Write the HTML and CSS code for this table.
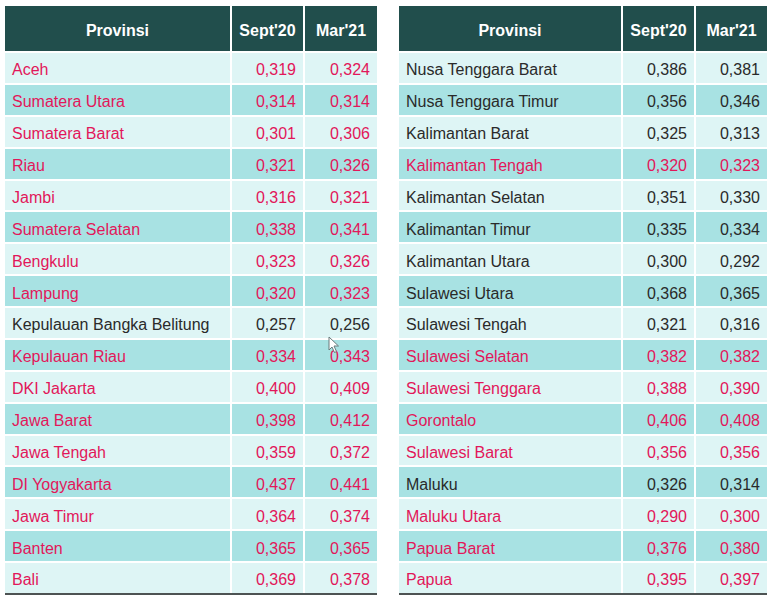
FILE: index.html
```html
<!DOCTYPE html>
<html lang="id">
<head>
<meta charset="utf-8">
<title>Provinsi</title>
<link rel="stylesheet" href="styles.css">
</head>
<body>
<div class="page">
  <div class="tbl tbl-left">
    <div class="row head"><div class="c name">Provinsi</div><div class="c">Sept'20</div><div class="c">Mar'21</div></div>
    <div class="row lt red"><div class="c name">Aceh</div><div class="c num">0,319</div><div class="c num">0,324</div></div>
    <div class="row dk red"><div class="c name">Sumatera Utara</div><div class="c num">0,314</div><div class="c num">0,314</div></div>
    <div class="row lt red"><div class="c name">Sumatera Barat</div><div class="c num">0,301</div><div class="c num">0,306</div></div>
    <div class="row dk red"><div class="c name">Riau</div><div class="c num">0,321</div><div class="c num">0,326</div></div>
    <div class="row lt red"><div class="c name">Jambi</div><div class="c num">0,316</div><div class="c num">0,321</div></div>
    <div class="row dk red"><div class="c name">Sumatera Selatan</div><div class="c num">0,338</div><div class="c num">0,341</div></div>
    <div class="row lt red"><div class="c name">Bengkulu</div><div class="c num">0,323</div><div class="c num">0,326</div></div>
    <div class="row dk red"><div class="c name">Lampung</div><div class="c num">0,320</div><div class="c num">0,323</div></div>
    <div class="row lt"><div class="c name">Kepulauan Bangka Belitung</div><div class="c num">0,257</div><div class="c num">0,256</div></div>
    <div class="row dk red"><div class="c name">Kepulauan Riau</div><div class="c num">0,334</div><div class="c num">0,343</div></div>
    <div class="row lt red"><div class="c name">DKI Jakarta</div><div class="c num">0,400</div><div class="c num">0,409</div></div>
    <div class="row dk red"><div class="c name">Jawa Barat</div><div class="c num">0,398</div><div class="c num">0,412</div></div>
    <div class="row lt red"><div class="c name">Jawa Tengah</div><div class="c num">0,359</div><div class="c num">0,372</div></div>
    <div class="row dk red"><div class="c name">DI Yogyakarta</div><div class="c num">0,437</div><div class="c num">0,441</div></div>
    <div class="row lt red"><div class="c name">Jawa Timur</div><div class="c num">0,364</div><div class="c num">0,374</div></div>
    <div class="row dk red"><div class="c name">Banten</div><div class="c num">0,365</div><div class="c num">0,365</div></div>
    <div class="row lt red"><div class="c name">Bali</div><div class="c num">0,369</div><div class="c num">0,378</div></div>
  </div>
  <div class="tbl tbl-right">
    <div class="row head"><div class="c name">Provinsi</div><div class="c">Sept'20</div><div class="c">Mar'21</div></div>
    <div class="row lt"><div class="c name">Nusa Tenggara Barat</div><div class="c num">0,386</div><div class="c num">0,381</div></div>
    <div class="row dk"><div class="c name">Nusa Tenggara Timur</div><div class="c num">0,356</div><div class="c num">0,346</div></div>
    <div class="row lt"><div class="c name">Kalimantan Barat</div><div class="c num">0,325</div><div class="c num">0,313</div></div>
    <div class="row dk red"><div class="c name">Kalimantan Tengah</div><div class="c num">0,320</div><div class="c num">0,323</div></div>
    <div class="row lt"><div class="c name">Kalimantan Selatan</div><div class="c num">0,351</div><div class="c num">0,330</div></div>
    <div class="row dk"><div class="c name">Kalimantan Timur</div><div class="c num">0,335</div><div class="c num">0,334</div></div>
    <div class="row lt"><div class="c name">Kalimantan Utara</div><div class="c num">0,300</div><div class="c num">0,292</div></div>
    <div class="row dk"><div class="c name">Sulawesi Utara</div><div class="c num">0,368</div><div class="c num">0,365</div></div>
    <div class="row lt"><div class="c name">Sulawesi Tengah</div><div class="c num">0,321</div><div class="c num">0,316</div></div>
    <div class="row dk red"><div class="c name">Sulawesi Selatan</div><div class="c num">0,382</div><div class="c num">0,382</div></div>
    <div class="row lt red"><div class="c name">Sulawesi Tenggara</div><div class="c num">0,388</div><div class="c num">0,390</div></div>
    <div class="row dk red"><div class="c name">Gorontalo</div><div class="c num">0,406</div><div class="c num">0,408</div></div>
    <div class="row lt red"><div class="c name">Sulawesi Barat</div><div class="c num">0,356</div><div class="c num">0,356</div></div>
    <div class="row dk"><div class="c name">Maluku</div><div class="c num">0,326</div><div class="c num">0,314</div></div>
    <div class="row lt red"><div class="c name">Maluku Utara</div><div class="c num">0,290</div><div class="c num">0,300</div></div>
    <div class="row dk red"><div class="c name">Papua Barat</div><div class="c num">0,376</div><div class="c num">0,380</div></div>
    <div class="row lt red"><div class="c name">Papua</div><div class="c num">0,395</div><div class="c num">0,397</div></div>
  </div>
  <svg class="cursor" width="12" height="18" viewBox="0 0 12 18"><path d="M1 1 L1 14 L4 11 L6.5 16.5 L8.5 15.5 L6 10 L10.5 10 Z" fill="#ffffff" stroke="#6a7a7c" stroke-width="1" stroke-linejoin="round"/></svg>
</div>
</body>
</html>
```

FILE: styles.css
```css
html, body {
  margin: 0;
  padding: 0;
  background: #ffffff;
}

.page {
  position: relative;
  display: flex;
  gap: 22px;
  padding: 6px 0 0 5px;
  font-family: "Liberation Sans", Arial, sans-serif;
  font-size: 16px;
  color: #2a2a2a;
}

.tbl {
  display: flex;
  flex-direction: column;
  gap: 2px;
  background: #ffffff;
  border-bottom: 2px solid #4d5353;
}

.tbl-left { --cols: 225px 71px 72px; }
.tbl-right { --cols: 222px 71px 71px; }

.row {
  display: grid;
  grid-template-columns: var(--cols);
  gap: 2px;
  height: 29.875px;
}

.c {
  display: flex;
  align-items: center;
  white-space: nowrap;
  padding-top: 5px;
  box-sizing: border-box;
}

.name {
  padding-left: 7px;
}

.num {
  justify-content: flex-end;
  padding-right: 7px;
}

.head {
  height: 45px;
}

.head .c {
  background: #214e4c;
  color: #ffffff;
  font-weight: bold;
  justify-content: center;
  padding: 5px 0 0 0;
}

.lt .c { background: #def5f5; }
.dk .c { background: #a8e2e3; }

.red .c { color: #e2175a; }

.cursor {
  position: absolute;
  left: 328px;
  top: 336px;
}
```
